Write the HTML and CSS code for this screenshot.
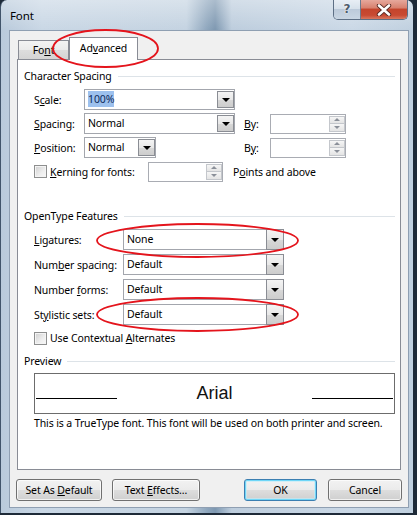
FILE: index.html
```html
<!DOCTYPE html>
<html>
<head>
<meta charset="utf-8">
<link rel="stylesheet" href="styles.css">
</head>
<body>
<div class="screen">
  <div class="window">
    <div class="titlebar">
      <span class="title">Font</span>
      <div class="caption">
        <div class="cap-help">?</div>
        <div class="cap-close">
          <svg width="16" height="12" viewBox="0 0 16 12"><path d="M3 1.5 L13 10.5 M13 1.5 L3 10.5" stroke="#5a2a24" stroke-width="4.4" stroke-linecap="round"/><path d="M3 1.5 L13 10.5 M13 1.5 L3 10.5" stroke="#fff" stroke-width="2.6" stroke-linecap="round"/></svg>
        </div>
      </div>
    </div>
    <div class="client">
      <div class="tabs">
        <div class="tab">Fo<u>n</u>t</div>
        <div class="tab active">Ad<u>v</u>anced</div>
      </div>
      <div class="panel">
        <div class="group-head"><span>Character Spacing</span><i></i></div>
        <div class="cs-grid">
          <div class="lbl">S<u>c</u>ale:</div>
          <div class="combo w151"><span class="val"><span class="sel">100%</span></span><span class="drop"><b></b></span></div>
          <div></div><div></div>

          <div class="lbl"><u>S</u>pacing:</div>
          <div class="combo w151"><span class="val">Normal</span><span class="drop"><b></b></span></div>
          <div class="lbl by"><u>B</u>y:</div>
          <div class="spin w76"><span class="val"></span><span class="arrows"><span class="up"><b></b></span><span class="dn"><b></b></span></span></div>

          <div class="lbl"><u>P</u>osition:</div>
          <div class="combo w72"><span class="val">Normal</span><span class="drop"><b></b></span></div>
          <div class="lbl by">B<u>y</u>:</div>
          <div class="spin w76"><span class="val"></span><span class="arrows"><span class="up"><b></b></span><span class="dn"><b></b></span></span></div>
        </div>
        <div class="kern-row">
          <div class="kern-lbl"><span class="check"></span><span><u>K</u>erning for fonts:</span></div>
          <div class="spin w75"><span class="val"></span><span class="arrows"><span class="up"><b></b></span><span class="dn"><b></b></span></span></div>
          <div class="pts">P<u>o</u>ints and above</div>
        </div>

        <div class="group-head ot"><span>OpenType Features</span><i></i></div>
        <div class="ot-grid">
          <div class="lbl"><u>L</u>igatures:</div>
          <div class="combo w161 ot"><span class="val">None</span><span class="drop"><b></b></span></div>
          <div class="lbl">Num<u>b</u>er spacing:</div>
          <div class="combo w161 ot"><span class="val">Default</span><span class="drop"><b></b></span></div>
          <div class="lbl">Number <u>f</u>orms:</div>
          <div class="combo w161 ot"><span class="val">Default</span><span class="drop"><b></b></span></div>
          <div class="lbl">St<u>y</u>listic sets:</div>
          <div class="combo w161 ot"><span class="val">Default</span><span class="drop"><b></b></span></div>
        </div>
        <div class="ctx-row"><span class="check"></span><span>Use Contextual <u>A</u>lternates</span></div>

        <div class="group-head pv"><span>Preview</span><i></i></div>
        <div class="preview">
          <span class="pline"></span>
          <span class="ptext">Arial</span>
          <span class="pline"></span>
        </div>
        <div class="desc">This is a TrueType font. This font will be used on both printer and screen.</div>
      </div>
      <div class="buttons">
        <div class="btn b-def">Set As <u>D</u>efault</div>
        <div class="btn b-fx">Text <u>E</u>ffects...</div>
        <div class="spacer"></div>
        <div class="btn b-ok">OK</div>
        <div class="btn b-cancel">Cancel</div>
      </div>
    </div>
  </div>
  <svg class="marks" width="417" height="515" viewBox="0 0 417 515">
    <ellipse cx="105.5" cy="48.5" rx="52.5" ry="18.5" fill="none" stroke="#e4141c" stroke-width="1.8"/>
    <ellipse cx="197.5" cy="240.5" rx="100.5" ry="16.5" fill="none" stroke="#e4141c" stroke-width="1.8"/>
    <ellipse cx="197.5" cy="314.5" rx="100.5" ry="16.5" fill="none" stroke="#e4141c" stroke-width="1.8"/>
  </svg>
</div>
</body>
</html>
```

FILE: styles.css
```css
* { box-sizing: border-box; }
html, body { margin: 0; padding: 0; }
body {
  background: #1e2a38;
  font-family: "Noto Sans", "Open Sans", sans-serif;
  font-size: 10.5px;
  letter-spacing: -0.12px;
  color: #000;
  width: 417px;
  height: 515px;
  overflow: hidden;
}
u { text-decoration: underline; text-underline-offset: 1px; }

.screen { position: relative; width: 417px; height: 515px; }

.window {
  width: 413px;
  height: 513px;
  padding: 0 5px 0 8px;
  border-radius: 7px 7px 0 0;
  border-left: 1px solid #41546a;
  background:
    linear-gradient(180deg, rgba(255,255,255,0.35) 0, rgba(255,255,255,0) 30px),
    linear-gradient(90deg, #b9cadb 0, #c9d7e5 10%, #c4d3e1 45%, #8ea6bd 50%, #7e98b1 52%, #bdcddd 56%, #cad8e6 85%, #c0d0df 100%);
}

.titlebar {
  height: 30px;
  display: flex;
  align-items: flex-start;
}
.title {
  padding: 8px 0 0 1px;
  font-size: 11.5px;
  line-height: 16px;
  color: #000;
}
.caption {
  margin-left: auto;
  display: flex;
  height: 20px;
  border: 1px solid #5d6f85;
  border-top: none;
  border-radius: 0 0 5px 5px;
  overflow: hidden;
}
.cap-help {
  width: 27px;
  height: 19px;
  border-right: 1px solid #6b7b8f;
  background: linear-gradient(180deg, #e8eef5 0, #d7e1eb 45%, #bccada 50%, #c9d6e3 100%);
  text-align: center;
  font-family: "DejaVu Sans", sans-serif;
  font-weight: bold;
  font-size: 12px;
  line-height: 19px;
  color: #4d5b6b;
  text-shadow: 0 0 1px #fff, 0 0 2px #fff;
}
.cap-close {
  width: 46px;
  height: 19px;
  display: flex;
  align-items: center;
  justify-content: center;
  background: linear-gradient(180deg, #e6a89c 0, #d88270 40%, #c4452d 50%, #c84a32 80%, #d9775f 100%);
}

.client {
  width: 400px;
  height: 478px;
  border: 1px solid #8f9fb2;
  background: #f0f0f0;
  padding-top: 6px;
  display: flex;
  flex-direction: column;
}

.tabs {
  height: 22px;
  margin: 0 7px;
  display: flex;
  align-items: flex-end;
  position: relative;
  z-index: 2;
}
.tab {
  height: 19px;
  width: 51px;
  margin-left: 1px;
  border: 1px solid #898c95;
  border-bottom: none;
  background: linear-gradient(180deg, #f3f3f3 0, #ebebeb 50%, #dddddd 51%, #d4d4d4 100%);
  text-align: center;
  line-height: 17px;
  padding-top: 1px;
}
.tab.active {
  height: 23px;
  width: 69px;
  margin-left: 0;
  margin-bottom: -1px;
  border-left: 1px solid #898c95;
  background: #fff;
  padding-top: 2px;
  line-height: 17px;
}

.panel {
  margin: 0 7px;
  height: 411px;
  border: 1px solid #898c95;
  background: #fff;
  padding: 0 6px 0 6px;
  display: flex;
  flex-direction: column;
  position: relative;
  z-index: 1;
}

.group-head {
  display: flex;
  align-items: center;
  height: 16px;
  line-height: 16px;
  margin-top: 8px;
  margin-right: -1px;
}
.group-head i {
  flex: 1;
  height: 1px;
  background: #dde3e8;
  margin-left: 6px;
}
.group-head.ot { margin-top: 26px; }
.group-head.pv { margin-top: 7px; }

.cs-grid {
  margin-top: 5px;
  margin-left: 10px;
  display: grid;
  grid-template-columns: 50px 151px 35px 76px;
  grid-auto-rows: 21px;
  row-gap: 3px;
  align-items: center;
}
.lbl { line-height: 14px; white-space: nowrap; }
.lbl.by { padding-left: 9px; }

.combo {
  height: 21px;
  border: 1px solid #a3a6ad;
  background: #fff;
  display: flex;
  align-items: stretch;
}
.w151 { width: 151px; }
.w72 { width: 72px; }
.w161 { width: 161px; }
.w76 { width: 76px; }
.w75 { width: 75px; }
.combo .val {
  flex: 1;
  padding-left: 3px;
  line-height: 19px;
  white-space: nowrap;
  overflow: hidden;
}
.sel {
  background: #9dc1ee;
  color: #0e2b5a;
  padding: 1px 0;
}
.drop {
  width: 17px;
  margin: 1px 0 1px 0;
  border: 1px solid #8a8d94;
  background: linear-gradient(180deg, #f4f4f4 0, #e8e8e8 50%, #d8d8d8 51%, #cdcdcd 100%);
  display: flex;
  align-items: center;
  justify-content: center;
}
.combo.ot .drop { margin: -1px -1px -1px 0; width: 18px; border-color: #8a8d94; }
.drop b {
  width: 0;
  height: 0;
  border-left: 4px solid transparent;
  border-right: 4px solid transparent;
  border-top: 4px solid #000;
  margin-top: 1px;
}

.spin {
  height: 20px;
  border: 1px solid #a9acb3;
  background: #fff;
  display: flex;
}
.spin .val { flex: 1; }
.arrows {
  width: 16px;
  display: flex;
  flex-direction: column;
  padding: 1px 0;
}
.arrows span {
  flex: 1;
  border: 1px solid #c4c7cc;
  background: linear-gradient(180deg, #f6f6f6, #e4e4e4);
  display: flex;
  align-items: center;
  justify-content: center;
}
.arrows .dn { border-top: none; }
.arrows .up b {
  width: 0; height: 0;
  border-left: 3px solid transparent;
  border-right: 3px solid transparent;
  border-bottom: 3px solid #8b9099;
}
.arrows .dn b {
  width: 0; height: 0;
  border-left: 3px solid transparent;
  border-right: 3px solid transparent;
  border-top: 3px solid #8b9099;
}

.kern-row {
  margin-top: 3px;
  margin-left: 10px;
  height: 21px;
  display: flex;
  align-items: center;
}
.kern-lbl {
  width: 114px;
  display: flex;
  align-items: center;
  gap: 3px;
}
.check {
  width: 13px;
  height: 13px;
  border: 1px solid #8e8f8f;
  background: linear-gradient(135deg, #cfcfcf 0, #eeeeee 60%, #f8f8f8 100%);
  box-shadow: inset 0 0 0 1px #f4f4f4;
  flex: none;
}
.pts { margin-left: 10px; }

.ot-grid {
  margin-top: 5px;
  margin-left: 10px;
  display: grid;
  grid-template-columns: 89px 161px;
  grid-auto-rows: 21px;
  row-gap: 4px;
  align-items: center;
}

.ctx-row {
  margin-top: 5px;
  margin-left: 10px;
  height: 16px;
  display: flex;
  align-items: center;
  gap: 3px;
}

.preview {
  margin-top: 4px;
  margin-left: 10px;
  width: 361px;
  height: 41px;
  border: 1px solid #6c6c6c;
  background: #fff;
  display: flex;
  align-items: baseline;
  padding: 9px 1px 0 1px;
}
.pline {
  display: block;
  width: 81px;
  height: 1px;
  background: #000;
}
.ptext {
  flex: 1;
  text-align: center;
  font-family: "Liberation Sans", Arial, sans-serif;
  font-size: 18px;
  letter-spacing: 0;
  line-height: 20px;
  color: #111;
}
.desc {
  margin-top: 1px;
  margin-left: 10px;
  line-height: 16px;
  white-space: nowrap;
}

.buttons {
  margin: 9px 6px 0 6px;
  height: 22px;
  display: flex;
  gap: 10px;
}
.spacer { flex: 1; }
.btn {
  height: 22px;
  border: 1px solid #707070;
  border-radius: 3px;
  background: linear-gradient(180deg, #f2f2f2 0, #ebebeb 48%, #dddddd 52%, #cfcfcf 100%);
  box-shadow: inset 0 0 0 1px rgba(255,255,255,0.7);
  text-align: center;
  line-height: 20px;
  white-space: nowrap;
}
.b-def { width: 86px; }
.b-fx { width: 88px; }
.b-ok {
  width: 73px;
  border-color: #3c7fb1;
  box-shadow: inset 0 0 0 1px #6fd6f7, inset 0 0 0 2px rgba(190,236,250,0.6);
}
.b-cancel { width: 74px; margin-left: 1px; }

.marks {
  position: absolute;
  left: 0;
  top: 0;
  pointer-events: none;
  z-index: 5;
}
```
